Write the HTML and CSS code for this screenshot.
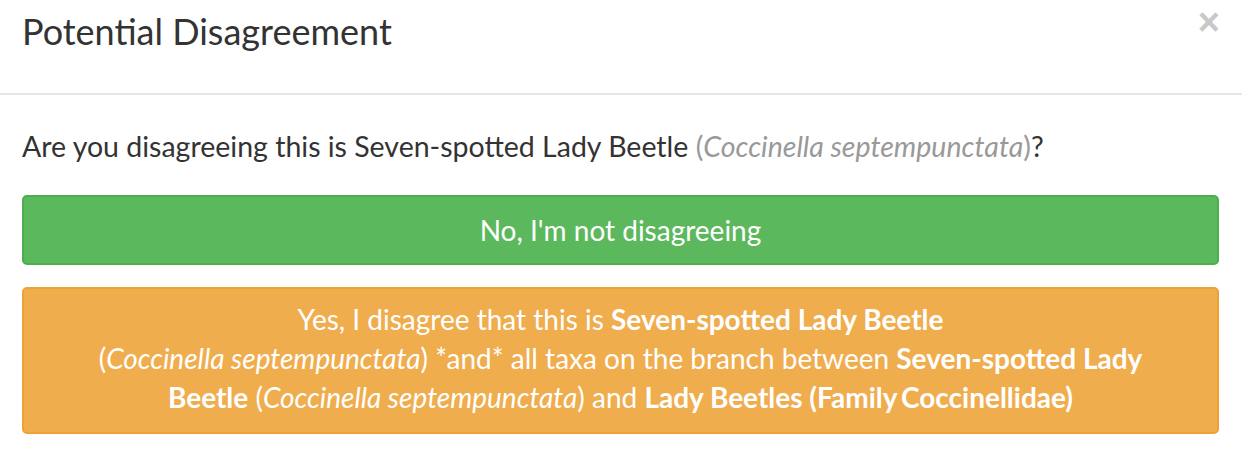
FILE: index.html
```html
<!DOCTYPE html>
<html>
<head>
<meta charset="utf-8">
<link rel="stylesheet" href="styles.css">
</head>
<body>
<div class="modal">
  <div class="modal-header">
    <h4 class="modal-title">Potential Disagreement</h4>
    <button class="close" aria-label="Close">&times;</button>
  </div>
  <div class="modal-body">
    <p class="question">Are you disagreeing this is Seven-spotted Lady Beetle <span class="sci">(<i>Coccinella septempunctata</i>)</span>?</p>
    <button class="btn btn-success">No, I'm not disagreeing</button>
    <button class="btn btn-warning">Yes, I disagree that this is <b>Seven-spotted Lady Beetle</b><br>(<i>Coccinella septempunctata</i>) *and* all taxa on the branch between <b>Seven-spotted Lady</b><br><b>Beetle</b> (<i>Coccinella septempunctata</i>) and <b>Lady Beetles (Family&thinsp;Coccinellidae)</b></button>
  </div>
</div>
</body>
</html>
```
FILE: styles.css
```css
html, body {
  margin: 0;
  padding: 0;
  background: #fff;
}
body {
  font-family: Lato, "Open Sans", sans-serif;
  color: #333;
}
.modal {
  width: 1242px;
  height: 452px;
  overflow: hidden;
}
.modal-header {
  height: 93px;
  border-bottom: 2px solid #e5e5e5;
  display: flex;
  justify-content: space-between;
  align-items: flex-start;
  padding: 0 22px;
  box-sizing: content-box;
}
.modal-title {
  margin: 0;
  padding-top: 7px;
  font-size: 36px;
  font-weight: 400;
  line-height: 48px;
  color: #333;
}
.close {
  border: none;
  background: none;
  padding: 0;
  margin-top: 0;
  margin-right: 0;
  font-family: "Liberation Sans", sans-serif;
  font-size: 38px;
  line-height: 44px;
  font-weight: 700;
  color: #c8c8c8;
}
.modal-body {
  padding: 0 23px 0 22px;
  display: flex;
  flex-direction: column;
}
.question {
  margin: 33px 0 31px;
  font-size: 28.5px;
  line-height: 36px;
  white-space: nowrap;
}
.sci {
  color: #999;
}
.btn {
  width: 100%;
  font-family: Lato, "Open Sans", sans-serif;
  font-size: 28px;
  color: #fff;
  border-radius: 5px;
  border: 2px solid transparent;
  text-align: center;
  white-space: nowrap;
}
.btn-success {
  background: #5cb85c;
  border-color: #4cae4c;
  height: 70px;
  line-height: 36px;
}
.btn-warning {
  margin-top: 22px;
  background: #f0ad4e;
  border-color: #eea236;
  padding: 11px 20px 15px;
  line-height: 39px;
}
.btn i {
  font-style: italic;
}
.btn b {
  font-weight: 700;
}
```
